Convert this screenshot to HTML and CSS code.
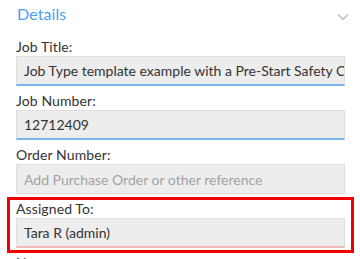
FILE: index.html
```html
<!DOCTYPE html>
<html lang="en">
<head>
    <meta charset="UTF-8">
    <meta name="viewport" content="width=device-width, initial-scale=1.0">
    <title>Job Details</title>
    <link rel="stylesheet" href="styles.css">
</head>
<body>
    <div class="details-panel">
        <div class="panel-header">
            <h2>Details</h2>
            <svg class="chevron" width="12" height="8" viewBox="0 0 12 8">
                <polyline points="1,1.5 6,6.5 11,1.5" fill="none" stroke="#bcbcbc" stroke-width="1.3"/>
            </svg>
        </div>
        <div class="field">
            <label for="jobTitle">Job Title:</label>
            <input class="text-input active" type="text" id="jobTitle" value="Job Type template example with a Pre-Start Safety Checklist">
        </div>
        <div class="field">
            <label for="jobNumber">Job Number:</label>
            <input class="text-input active" type="text" id="jobNumber" value="12712409">
        </div>
        <div class="field">
            <label for="orderNumber">Order Number:</label>
            <input class="text-input" type="text" id="orderNumber" placeholder="Add Purchase Order or other reference">
        </div>
        <div class="field highlight">
            <label for="assignedTo">Assigned To:</label>
            <input class="text-input assigned" type="text" id="assignedTo" value="Tara R (admin)">
        </div>
        <div class="field">
            <label for="notes">Notes:</label>
            <input class="text-input" type="text" id="notes">
        </div>
    </div>
</body>
</html>
```

FILE: styles.css
```css
body {
    margin: 0;
    background-color: #fff;
    font-family: Lato, "Open Sans", sans-serif;
    color: #333;
}

.details-panel {
    padding: 0 16px;
    width: 329px;
}

.panel-header {
    display: flex;
    justify-content: space-between;
    align-items: flex-start;
    height: 32px;
}

.panel-header h2 {
    margin: 0;
    margin-left: 1px;
    padding-top: 4px;
    font-size: 16px;
    line-height: 19px;
    font-weight: normal;
    letter-spacing: 0.1px;
    color: #48a2f2;
}

.chevron {
    margin-right: -4px;
    margin-top: 13px;
}

.field {
    padding-top: 6px;
}

.field label {
    display: block;
    font-size: 14px;
    line-height: 18px;
    letter-spacing: 0.1px;
    color: #333;
}

.text-input {
    display: block;
    box-sizing: border-box;
    width: 100%;
    height: 30px;
    margin: 0;
    padding: 0 0 0 7px;
    background-color: #ededed;
    border: 1px solid #dedede;
    border-radius: 0;
    font-family: Lato, "Open Sans", sans-serif;
    font-size: 14px;
    color: #333;
    outline: none;
}

.text-input::placeholder {
    color: #a3a3a3;
}

.text-input.active {
    border-bottom: 2px solid #7db5ef;
}

.text-input.assigned {
    border-bottom: 2px solid #f5b8b8;
}

.highlight {
    position: relative;
}

.highlight::after {
    content: "";
    position: absolute;
    top: 3px;
    left: -9px;
    right: -9px;
    bottom: -5px;
    border: 3px solid #f20000;
    pointer-events: none;
}
```
